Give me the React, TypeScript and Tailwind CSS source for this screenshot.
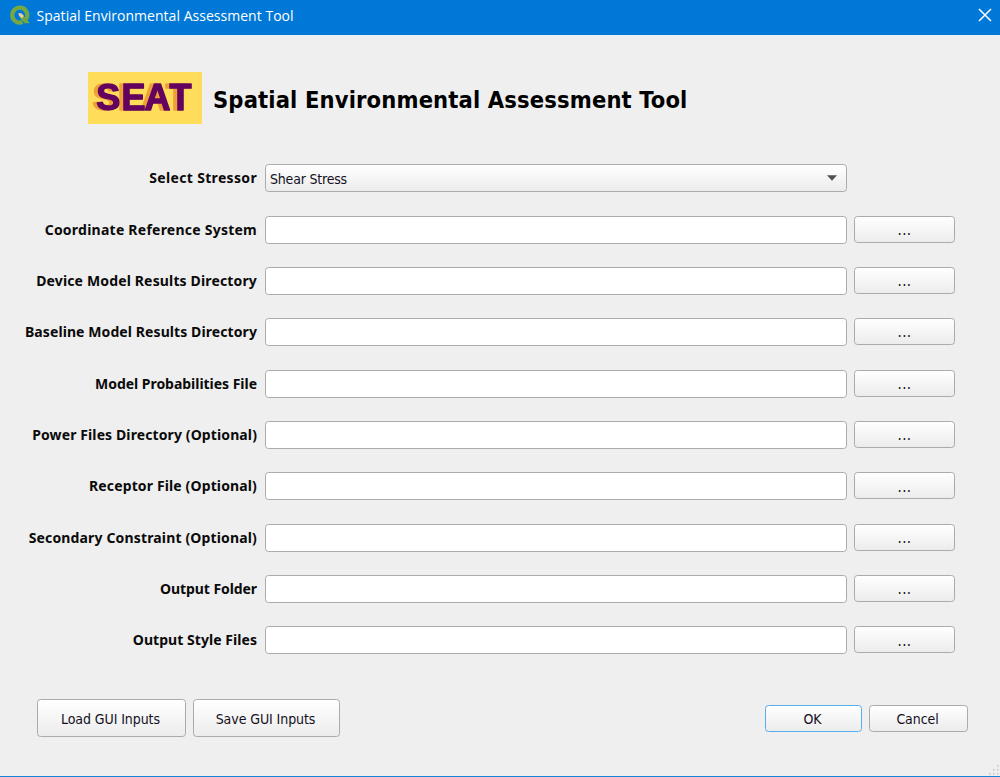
import React from "react";

const FIELDS: { label: string; spacing: string }[] = [
  { label: "Coordinate Reference System", spacing: "tracking-[0.24px]" },
  { label: "Device Model Results Directory", spacing: "tracking-[0.15px]" },
  { label: "Baseline Model Results Directory", spacing: "tracking-[0.09px]" },
  { label: "Model Probabilities File", spacing: "tracking-[-0.03px]" },
  { label: "Power Files Directory (Optional)", spacing: "tracking-[0.11px]" },
  { label: "Receptor File (Optional)", spacing: "tracking-[0.13px]" },
  { label: "Secondary Constraint (Optional)", spacing: "tracking-[0.15px]" },
  { label: "Output Folder", spacing: "tracking-[-0.08px]" },
  { label: "Output Style Files", spacing: "tracking-[0.05px]" },
];

const BUTTON =
  "flex items-center justify-center rounded-[3.5px] border bg-linear-to-b from-white to-[#ececec] font-['DejaVu_Sans_Condensed','DejaVu_Sans',sans-serif] text-[14px] tracking-[-0.08px] text-[#14101c]";

function QgisIcon() {
  return (
    <svg width="22" height="22" viewBox="0 0 22 22" className="shrink-0">
      <path d="M17 14.2A7.5 7.5 0 1 0 13.6 17" fill="none" stroke="#75a843" strokeWidth="4.2" />
      <path d="M11 11h3.6l6.4 7.3h-5.2L11 13z" fill="#75a843" />
      <path d="M9.4 8l3.4.6 2.2 2.4-2.4 2.2-2.6-2.4z" fill="#f0cda0" />
    </svg>
  );
}

function SeatLogo() {
  return (
    <svg width="114" height="52" viewBox="0 0 114 52" className="shrink-0 bg-[#ffdc5a]">
      <text
        x="8.3 33.6 56.4 81.4"
        y="38.3"
        className="fill-[#63035f] stroke-[#63035f] font-['Liberation_Sans',sans-serif] text-[36px] font-bold drop-shadow-[-4px_0_0_#ef9f37]"
        strokeWidth="1.4"
        strokeLinejoin="round"
      >
        SEAT
      </text>
    </svg>
  );
}

function SizeGrip() {
  return (
    <svg width="12" height="12" viewBox="0 0 12 12" fill="#c4c4c4">
      <path d="M9 1h1.5v1.5H9zM5 5h1.5v1.5H5zM9 5h1.5v1.5H9zM1 9h1.5v1.5H1zM5 9h1.5v1.5H5zM9 9h1.5v1.5H9z" />
    </svg>
  );
}

function Label({ text, spacing }: { text: string; spacing: string }) {
  return (
    <span
      className={`w-[257px] shrink-0 whitespace-nowrap text-right font-['Noto_Sans',sans-serif] text-[14px] leading-[28px] font-bold text-[#0a0a0a] ${spacing}`}
    >
      {text}
    </span>
  );
}

export default function App() {
  return (
    <div className="flex h-[777px] w-[1000px] flex-col overflow-hidden border-b-[1.5px] border-[#1683d8] bg-[#efefef]">
      <header className="flex h-[35px] shrink-0 items-start bg-[#0078d7] pt-[5px] pr-[8px] pl-[9px]">
        <QgisIcon />
        <h2 className="ml-[5.5px] font-['Open_Sans',sans-serif] text-[14px] leading-[22px] tracking-[0.03px] whitespace-nowrap text-white">
          Spatial Environmental Assessment Tool
        </h2>
        <svg width="14" height="14" viewBox="0 0 14 14" className="mt-[3px] ml-auto">
          <path d="M1 1l12 12M13 1L1 13" stroke="#fff" strokeWidth="1.5" />
        </svg>
      </header>

      <div className="mt-[37px] flex h-[52px] shrink-0 items-center pl-[88px]">
        <SeatLogo />
        <h1 className="ml-[11px] pt-[3px] font-['DejaVu_Sans_Condensed','DejaVu_Sans',sans-serif] text-[23.5px] leading-[52px] font-bold tracking-[0.14px] whitespace-nowrap text-black">
          Spatial Environmental Assessment Tool
        </h1>
      </div>

      <main className="mt-[40px] flex shrink-0 flex-col">
        <div className="flex h-[51.5px] items-start">
          <Label text="Select Stressor" spacing="tracking-[0.33px]" />
          <div className="ml-[8px] flex h-[28px] w-[582px] items-center justify-between rounded-[3.5px] border border-[#ababab] bg-linear-to-b from-white to-[#ececec] pr-[9px] pl-[4px] font-['DejaVu_Sans_Condensed','DejaVu_Sans',sans-serif] text-[14px] tracking-[-0.2px] text-[#14101c]">
            <span className="pt-[2px]">Shear Stress</span>
            <svg width="10" height="6" viewBox="0 0 10 6">
              <path d="M0 .3h10L5 5.7z" fill="#505050" />
            </svg>
          </div>
        </div>
        {FIELDS.map((field) => (
          <div key={field.label} className="flex h-[51.36px] items-start">
            <Label text={field.label} spacing={field.spacing} />
            <div className="ml-[8px] h-[28px] w-[582px] rounded-[3.5px] border border-[#ababab] bg-white" />
            <button className={`${BUTTON} ml-[7px] h-[27px] w-[101px] border-[#ababab]`}>
              <span className="pt-[2px] text-[15px] tracking-[0.3px]">...</span>
            </button>
          </div>
        ))}
      </main>

      <footer className="mt-[21px] flex h-[38px] shrink-0 items-center pr-[32px] pl-[37px]">
        <button className={`${BUTTON} h-[38px] w-[149px] border-[#ababab] pt-[4px] pr-[2px]`}>Load GUI Inputs</button>
        <button className={`${BUTTON} ml-[7px] h-[38px] w-[147px] border-[#ababab] pt-[4px] pr-[2px]`}>Save GUI Inputs</button>
        <button className={`${BUTTON} mt-[2px] ml-auto h-[27px] w-[97px] border-[#55aef0] to-[#e6edf4] pt-[2px] pr-[2px]`}>OK</button>
        <button className={`${BUTTON} mt-[2px] ml-[7px] h-[27px] w-[99px] border-[#ababab] pt-[2px] pr-[2px]`}>Cancel</button>
      </footer>

      <div className="mt-auto flex justify-end">
        <SizeGrip />
      </div>
    </div>
  );
}
